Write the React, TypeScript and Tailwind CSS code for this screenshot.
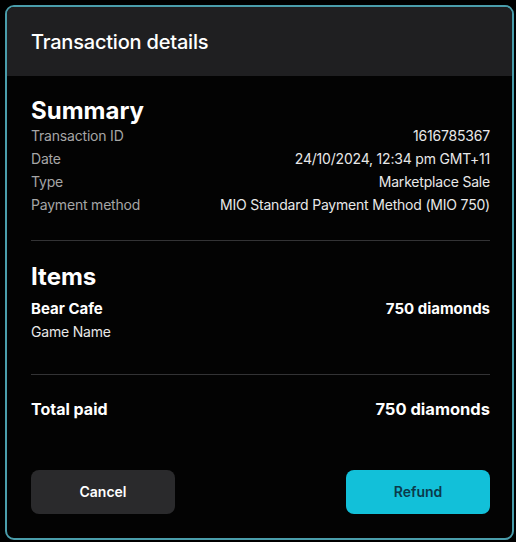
const summary = [
  ["Transaction ID", "1616785367"],
  ["Date", "24/10/2024, 12:34 pm GMT+11"],
  ["Type", "Marketplace Sale"],
  ["Payment method", "MIO Standard Payment Method (MIO 750)"],
];

export default function App() {
  return (
    <div
      className="h-[542px] w-[516px] bg-black p-[5px]"
      style={{ fontFamily: "Inter, 'Noto Sans', sans-serif" }}
    >
      <div className="flex h-[535px] w-[509px] flex-col overflow-hidden rounded-[9px] border-2 border-[#4a9dab] bg-[#030303]">
        <div className="flex h-[69px] items-center bg-[#1f1f21] px-6">
          <h1 className="text-[20px] font-medium tracking-[-0.2px] text-white">Transaction details</h1>
        </div>

        <div className="flex flex-1 flex-col pl-6 pr-[22px] pt-[22px]">
          <h2 className="text-[24px] font-bold leading-[26px] text-white">Summary</h2>
          <div className="flex flex-col">
            {summary.map(([label, value]) => (
              <div
                key={label}
                className="flex justify-between text-sm leading-[23px] tracking-[-0.2px]"
              >
                <span className="text-[#a6a6a6]">{label}</span>
                <span className="text-[#e8e8e8]">{value}</span>
              </div>
            ))}
          </div>

          <div className="mt-6 h-px bg-[#333335]" />

          <h2 className="mt-[22px] text-[24px] font-bold leading-[28px] text-white">Items</h2>
          <div className="mt-[6px] flex justify-between">
            <div className="flex flex-col">
              <span className="text-[15px] font-bold leading-[23px] text-white">Bear Cafe</span>
              <span className="text-sm leading-[23px] tracking-[-0.2px] text-[#e8e8e8]">Game Name</span>
            </div>
            <span className="text-[15px] font-bold leading-[23px] text-white">750 diamonds</span>
          </div>

          <div className="mt-[31px] h-px bg-[#333335]" />

          <div className="mt-[22px] flex justify-between text-[16px] font-bold leading-[24px] text-white">
            <span>Total paid</span>
            <span className="text-[16.5px]">750 diamonds</span>
          </div>

          <div className="mt-[49px] flex justify-between">
            <button className="h-[44px] w-[144px] rounded-lg bg-[#2a2a2c] text-sm font-semibold text-white">
              Cancel
            </button>
            <button className="h-[44px] w-[144px] rounded-lg bg-[#12c0d9] text-sm font-semibold text-[#0b3a4a]">
              Refund
            </button>
          </div>
        </div>
      </div>
    </div>
  );
}
